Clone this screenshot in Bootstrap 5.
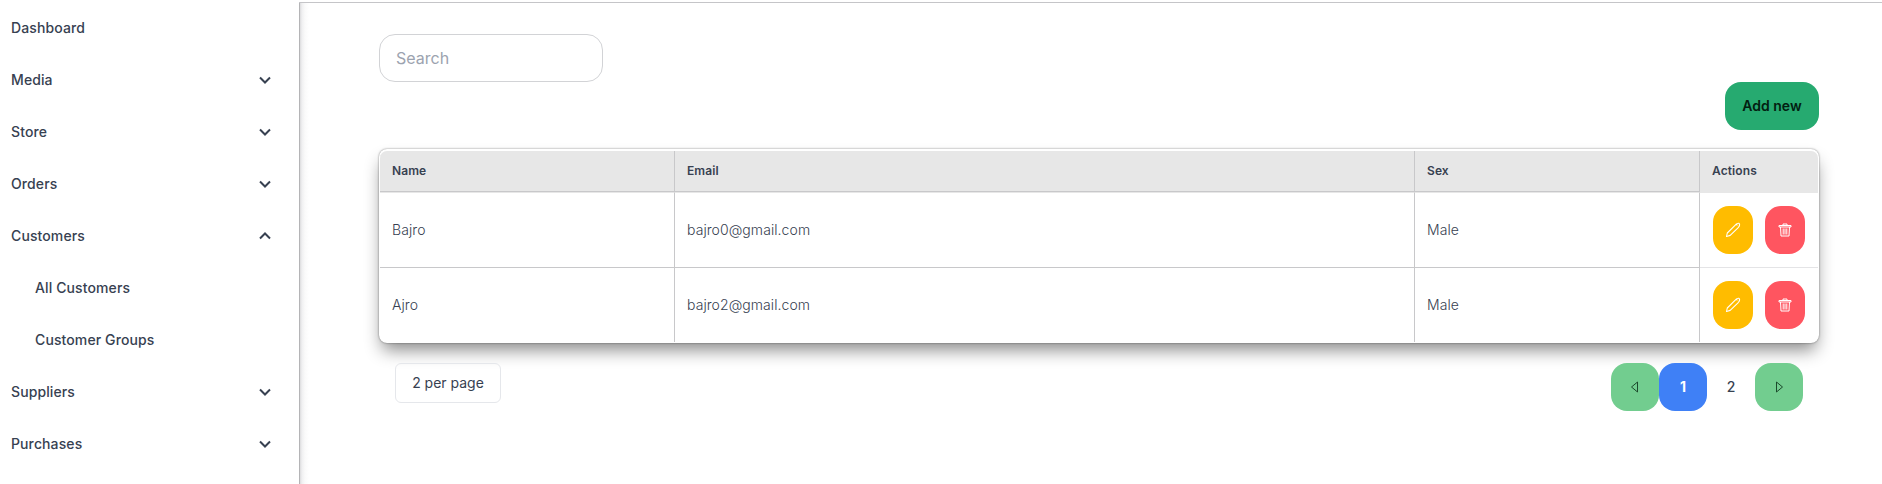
<!DOCTYPE html>
<html lang="en">
<head>
<meta charset="utf-8">
<meta name="viewport" content="width=device-width, initial-scale=1">
<title>Customers</title>
<link href="https://cdn.jsdelivr.net/npm/bootstrap@5.3.0/dist/css/bootstrap.min.css" rel="stylesheet">
<style>
body{font-family:Inter,"Liberation Sans",sans-serif;font-size:14px;line-height:20px;color:#374151;background:#fff;height:484px;overflow:hidden}
.sidebar{width:299px;height:484px;padding:2px 0 0 11px;background:#fff;font-weight:500;letter-spacing:.11px}
.sidebar .nav-link{height:52px;padding:0 27px 0 0;color:#374151}
.sidebar .sub-link{padding-left:24px}
.content-area{margin-top:2px;height:482px;border-top:1px solid #c5c5c8;padding:31px 63px 0 80px;background:linear-gradient(90deg,#b4b4b6 0 1px,#dcdcde 1px,#f0f0f1 3px,#fafafa 6px,#fff 10px)}
.search-box{width:224px;height:48px;border:1px solid #d2d3d6;border-radius:16px;padding:0 16px;font-size:16px;color:#374151}
.search-box::placeholder{color:#9ca3af;opacity:1}
.btn-add{width:94px;height:48px;border-radius:16px;background:#26aa70;color:#022011;font-size:14px;font-weight:600;padding:0 0 2px}
.btn-add:hover{background:#229a65}
.grid-panel{width:1440px;height:194px;margin-top:19px;border-radius:8px;padding:2px 1px 0;background:#fff;box-shadow:0 0 2px rgba(0,0,0,.5),0 10px 17px -3px rgba(0,0,0,.46)}
.grid-table{table-layout:fixed;border-collapse:separate;border-spacing:0;width:1438px}
.grid-table th{height:42px;padding:0 12px 1px;background:#e7e7e7;font-size:12px;font-weight:600;letter-spacing:.1px;border-bottom:1px solid #e7e7e7;border-right:1px solid #c8c8ca;box-shadow:inset 0 -1px #c8c8ca;vertical-align:middle}
.grid-table td{height:75px;padding:0 12px;font-weight:300;letter-spacing:.07px;border-bottom:1px solid #c8c8ca;border-right:1px solid #c8c8ca;vertical-align:middle}
.grid-table th:last-child{border-right:0;box-shadow:none;border-top-right-radius:7px}
.grid-table th:first-child{border-top-left-radius:7px}
.grid-table td:last-child{border-right:0;border-bottom-color:#e4e4e6;padding:0 13px}
.grid-table tr:last-child td{height:74px;border-bottom:0}
.btn-icon{width:40px;height:48px;border-radius:16px;padding:0;color:#fff}
.btn-edit{background:#ffbc00}
.btn-del{background:#ff5560}
.per-page{width:106px;height:40px;border:1px solid #e5e7eb;border-radius:6px;padding:0;font-size:14px;color:#374151;line-height:20px}
.pager-btn{width:48px;height:48px;border-radius:16px;padding:0 0 1px;font-size:14px;line-height:20px;color:#374151;font-weight:500}
.pager-step{background:#72cd8f;color:#1c4a2c}
.pager-btn.current{background:#3f80f6;color:#fff;font-weight:700}
</style>
</head>
<body>
<div class="d-flex">
  <nav class="sidebar nav flex-column flex-nowrap flex-shrink-0">
    <a class="nav-link d-flex align-items-center" href="#">Dashboard</a>
    <a class="nav-link d-flex align-items-center justify-content-between" href="#">Media<svg width="14" height="14" viewBox="0 0 14 14" fill="none" stroke="currentColor" stroke-width="2"><path d="M2 4.5 7 9.5 12 4.5"/></svg></a>
    <a class="nav-link d-flex align-items-center justify-content-between" href="#">Store<svg width="14" height="14" viewBox="0 0 14 14" fill="none" stroke="currentColor" stroke-width="2"><path d="M2 4.5 7 9.5 12 4.5"/></svg></a>
    <a class="nav-link d-flex align-items-center justify-content-between" href="#">Orders<svg width="14" height="14" viewBox="0 0 14 14" fill="none" stroke="currentColor" stroke-width="2"><path d="M2 4.5 7 9.5 12 4.5"/></svg></a>
    <a class="nav-link d-flex align-items-center justify-content-between" href="#">Customers<svg width="14" height="14" viewBox="0 0 14 14" fill="none" stroke="currentColor" stroke-width="2"><path d="M2 9.5 7 4.5 12 9.5"/></svg></a>
    <a class="nav-link sub-link d-flex align-items-center" href="#">All Customers</a>
    <a class="nav-link sub-link d-flex align-items-center" href="#">Customer Groups</a>
    <a class="nav-link d-flex align-items-center justify-content-between" href="#">Suppliers<svg width="14" height="14" viewBox="0 0 14 14" fill="none" stroke="currentColor" stroke-width="2"><path d="M2 4.5 7 9.5 12 4.5"/></svg></a>
    <a class="nav-link d-flex align-items-center justify-content-between" href="#">Purchases<svg width="14" height="14" viewBox="0 0 14 14" fill="none" stroke="currentColor" stroke-width="2"><path d="M2 4.5 7 9.5 12 4.5"/></svg></a>
  </nav>
  <main class="content-area flex-grow-1">
    <input class="search-box d-block" type="text" placeholder="Search" aria-label="Search">
    <div class="d-flex justify-content-end"><button class="btn btn-add border-0" type="button">Add new</button></div>
    <div class="grid-panel">
      <table class="grid-table">
        <colgroup><col style="width:295px"><col style="width:740px"><col style="width:285px"><col style="width:118px"></colgroup>
        <thead><tr><th>Name</th><th>Email</th><th>Sex</th><th>Actions</th></tr></thead>
        <tbody>
          <tr><td>Bajro</td><td>bajro0@gmail.com</td><td>Male</td>
            <td><div class="d-flex justify-content-between">
              <button class="btn btn-icon btn-edit border-0 d-flex align-items-center justify-content-center" aria-label="Edit"><svg width="16" height="16" viewBox="0 0 16 16" fill="none" stroke="currentColor" stroke-width="1.1" stroke-linejoin="round"><path d="M1.500 14.500 2.300 11 10.500 2.800Q12.300 1 14 1.300 15.400 2.600 13.500 5.300L5.200 13.400ZM9 4.300 11.200 2.200 12.400 3.400"/></svg></button>
              <button class="btn btn-icon btn-del border-0 d-flex align-items-center justify-content-center" aria-label="Delete"><svg width="14" height="14" viewBox="0 0 14 14" fill="none" stroke="currentColor" stroke-width="1"><path d="M1 2.500H13V4H1ZM5 2.500V1H9V2.500M2.500 4 3 13H11L11.500 4M5.200 5.500V11.500M7 5.500V11.500M8.800 5.500V11.500"/></svg></button>
            </div></td></tr>
          <tr><td>Ajro</td><td>bajro2@gmail.com</td><td>Male</td>
            <td><div class="d-flex justify-content-between">
              <button class="btn btn-icon btn-edit border-0 d-flex align-items-center justify-content-center" aria-label="Edit"><svg width="16" height="16" viewBox="0 0 16 16" fill="none" stroke="currentColor" stroke-width="1.1" stroke-linejoin="round"><path d="M1.500 14.500 2.300 11 10.500 2.800Q12.300 1 14 1.300 15.400 2.600 13.500 5.300L5.200 13.400ZM9 4.300 11.200 2.200 12.400 3.400"/></svg></button>
              <button class="btn btn-icon btn-del border-0 d-flex align-items-center justify-content-center" aria-label="Delete"><svg width="14" height="14" viewBox="0 0 14 14" fill="none" stroke="currentColor" stroke-width="1"><path d="M1 2.500H13V4H1ZM5 2.500V1H9V2.500M2.500 4 3 13H11L11.500 4M5.200 5.500V11.500M7 5.500V11.500M8.800 5.500V11.500"/></svg></button>
            </div></td></tr>
        </tbody>
      </table>
    </div>
    <div class="d-flex justify-content-between align-items-start px-3" style="margin-top:20px">
      <button class="btn per-page" type="button">2 per page</button>
      <div class="d-flex">
        <button class="btn pager-btn pager-step border-0 d-flex align-items-center justify-content-center" aria-label="Previous"><svg width="10" height="12" viewBox="0 0 10 12" fill="none" stroke="currentColor" stroke-width="1" stroke-linejoin="round"><path d="M7.500 1V11L1.500 6Z"/></svg></button>
        <button class="btn pager-btn current border-0">1</button>
        <button class="btn pager-btn border-0">2</button>
        <button class="btn pager-btn pager-step border-0 d-flex align-items-center justify-content-center" aria-label="Next"><svg width="10" height="12" viewBox="0 0 10 12" fill="none" stroke="currentColor" stroke-width="1" stroke-linejoin="round"><path d="M2.500 1V11L8.500 6Z"/></svg></button>
      </div>
    </div>
  </main>
</div>
<script src="https://cdn.jsdelivr.net/npm/bootstrap@5.3.0/dist/js/bootstrap.bundle.min.js"></script>
</body>
</html>
